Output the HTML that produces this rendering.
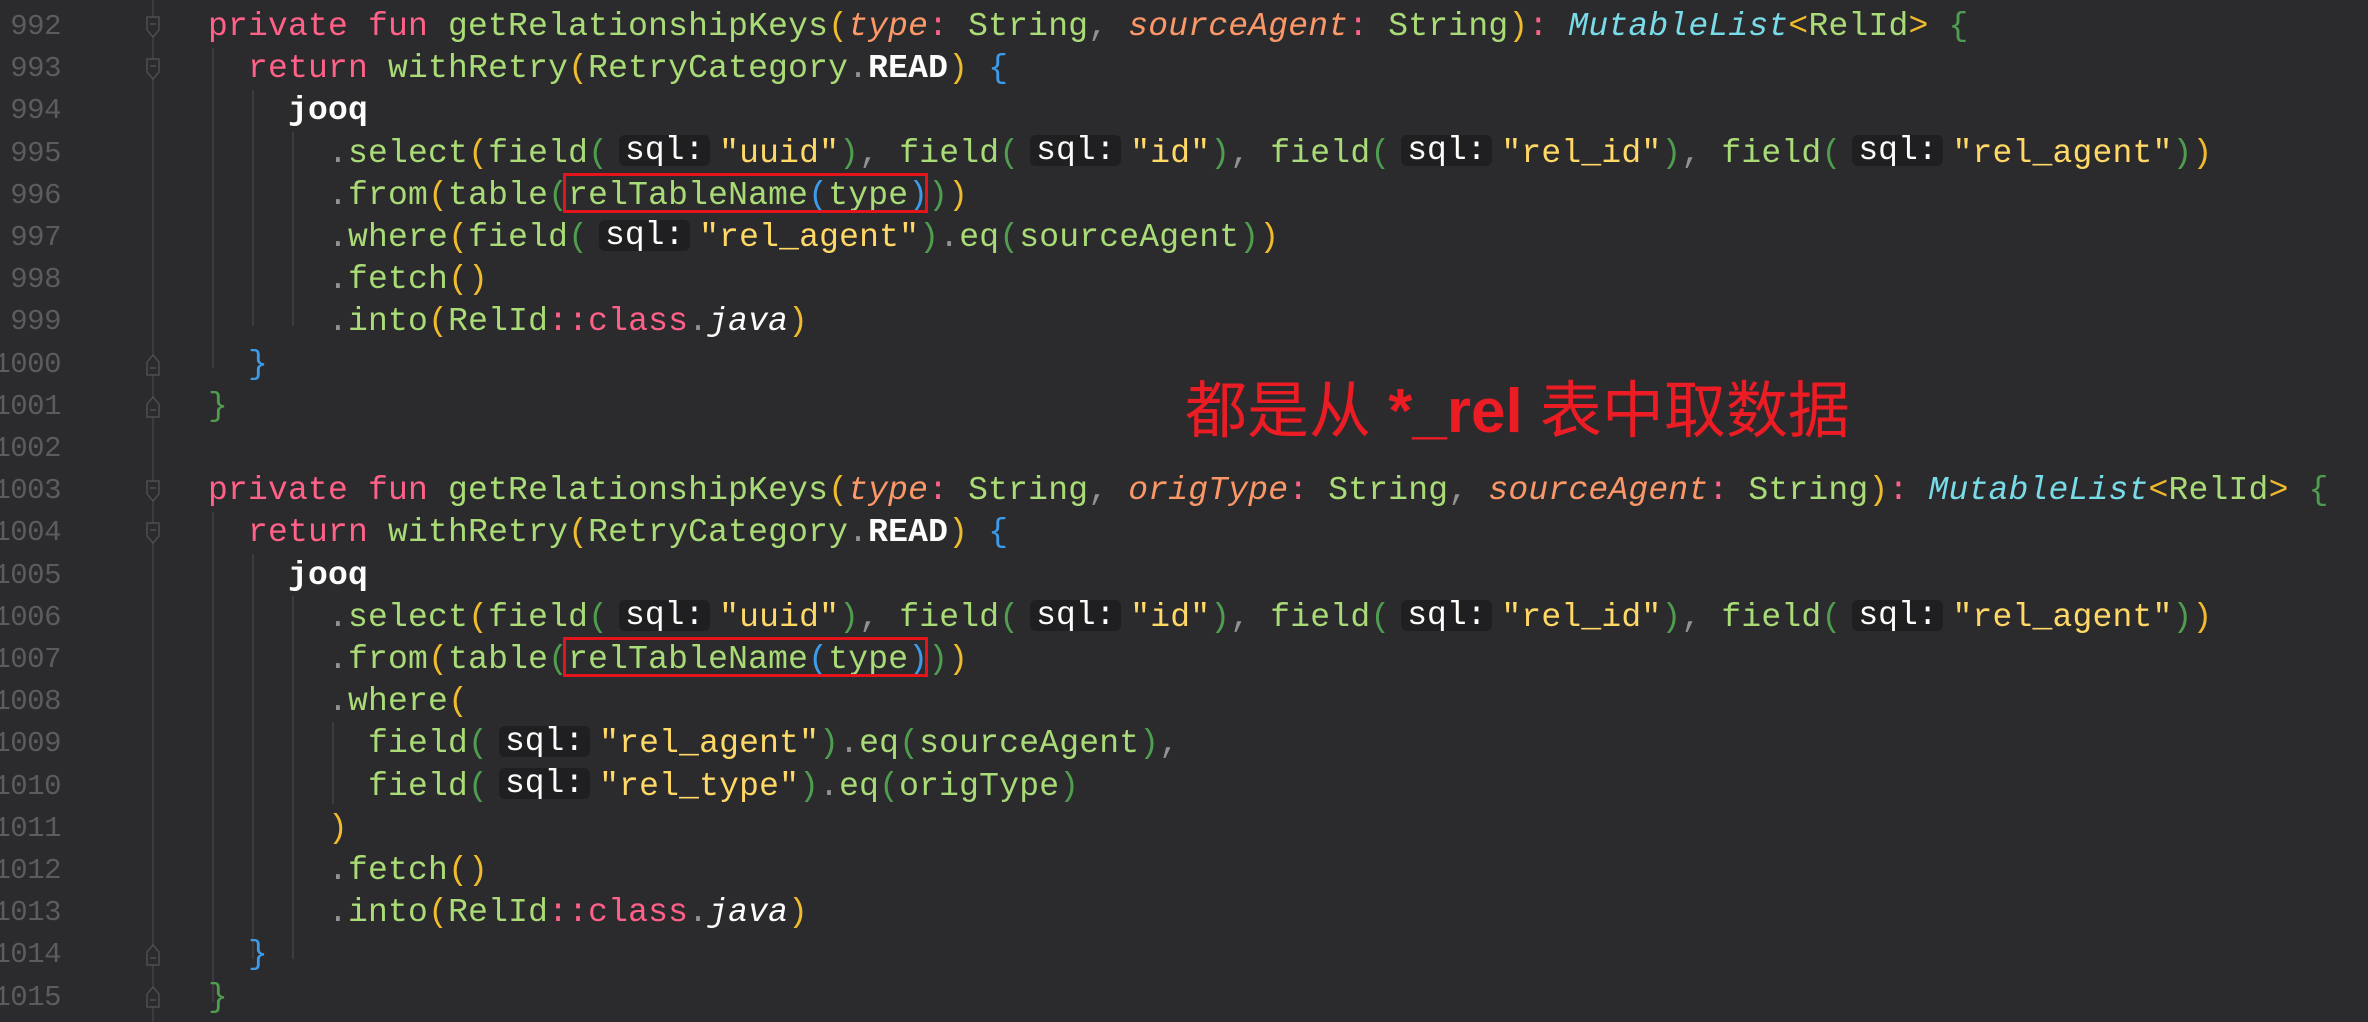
<!DOCTYPE html>
<html><head><meta charset="utf-8"><style>
html,body{margin:0;padding:0;background:#2b2a2d;width:2368px;height:1022px;overflow:hidden}
.ln{position:absolute;left:-39px;width:100px;text-align:right;font-family:"Liberation Mono",monospace;font-size:29px;color:#5d5b5f;line-height:42.2px;letter-spacing:-0.5px}
.code{position:absolute;left:208px;font-family:"Liberation Mono",monospace;font-size:33px;letter-spacing:0.2px;line-height:42.2px;white-space:pre;color:#a9dc76}
.k{color:#ff6188}.f{color:#a9dc76}.s{color:#ffd866}.p{color:#fc9867;font-style:italic}.t{color:#78dce8;font-style:italic}
.w{color:#fcfcfa}.wb{color:#fcfcfa;font-weight:bold}.wi{color:#fcfcfa;font-style:italic}
.y{color:#f0bb2c}.g{color:#4f9e4f}.b{color:#3d9be9}.c{color:#939293}.pk{color:#ff6188}
.h{display:inline-block;width:91px;height:31px;line-height:31px;margin:0 9px 0 11px;background:#1f1e21;border-radius:6px;color:#fcfcfa;text-align:center;vertical-align:middle;position:relative;top:-2px;letter-spacing:0}
.gl{position:absolute;width:2px;background:#3d3b3f}
.fold{position:absolute;left:146px;width:14px;height:22px}
.box{position:absolute;left:563px;width:365px;height:40px;border:3px solid #e3141b;box-sizing:border-box}
.note{position:absolute;left:1185px;top:360px;font-family:"Liberation Sans","Noto Sans CJK SC",sans-serif;font-size:62px;color:#ec1c24;white-space:nowrap}
</style></head><body>
<div class="gl" style="left:152px;top:0;height:1022px"></div>
<div class="gl" style="left:212px;top:48px;height:320px"></div>
<div class="gl" style="left:252px;top:90px;height:236px"></div>
<div class="gl" style="left:292px;top:132px;height:194px"></div>
<div class="gl" style="left:212px;top:512px;height:490px"></div>
<div class="gl" style="left:252px;top:554px;height:405px"></div>
<div class="gl" style="left:292px;top:596px;height:363px"></div>
<div class="gl" style="left:332px;top:722px;height:82px"></div>
<svg class="fold" style="top:16px" viewBox="0 0 14 22"><path d="M1 1H13V14L7 21L1 14Z" fill="#2b2a2d" stroke="#4e4c50" stroke-width="1.5"/><path d="M4 8H10" stroke="#4e4c50" stroke-width="1.5"/></svg>
<svg class="fold" style="top:58px" viewBox="0 0 14 22"><path d="M1 1H13V14L7 21L1 14Z" fill="#2b2a2d" stroke="#4e4c50" stroke-width="1.5"/><path d="M4 8H10" stroke="#4e4c50" stroke-width="1.5"/></svg>
<svg class="fold" style="top:354px" viewBox="0 0 14 22"><path d="M1 21H13V8L7 1L1 8Z" fill="#2b2a2d" stroke="#4e4c50" stroke-width="1.5"/><path d="M4 14H10" stroke="#4e4c50" stroke-width="1.5"/></svg>
<svg class="fold" style="top:396px" viewBox="0 0 14 22"><path d="M1 21H13V8L7 1L1 8Z" fill="#2b2a2d" stroke="#4e4c50" stroke-width="1.5"/><path d="M4 14H10" stroke="#4e4c50" stroke-width="1.5"/></svg>
<svg class="fold" style="top:480px" viewBox="0 0 14 22"><path d="M1 1H13V14L7 21L1 14Z" fill="#2b2a2d" stroke="#4e4c50" stroke-width="1.5"/><path d="M4 8H10" stroke="#4e4c50" stroke-width="1.5"/></svg>
<svg class="fold" style="top:522px" viewBox="0 0 14 22"><path d="M1 1H13V14L7 21L1 14Z" fill="#2b2a2d" stroke="#4e4c50" stroke-width="1.5"/><path d="M4 8H10" stroke="#4e4c50" stroke-width="1.5"/></svg>
<svg class="fold" style="top:944px" viewBox="0 0 14 22"><path d="M1 21H13V8L7 1L1 8Z" fill="#2b2a2d" stroke="#4e4c50" stroke-width="1.5"/><path d="M4 14H10" stroke="#4e4c50" stroke-width="1.5"/></svg>
<svg class="fold" style="top:986px" viewBox="0 0 14 22"><path d="M1 21H13V8L7 1L1 8Z" fill="#2b2a2d" stroke="#4e4c50" stroke-width="1.5"/><path d="M4 14H10" stroke="#4e4c50" stroke-width="1.5"/></svg>

<div class="ln" style="top:6px">992<br>993<br>994<br>995<br>996<br>997<br>998<br>999<br>1000<br>1001<br>1002<br>1003<br>1004<br>1005<br>1006<br>1007<br>1008<br>1009<br>1010<br>1011<br>1012<br>1013<br>1014<br>1015</div>

<div class="code" style="top:6px"><span class="k">private fun</span> getRelationshipKeys<span class="y">(</span><span class="p">type</span><span class="pk">:</span> String<span class="c">,</span> <span class="p">sourceAgent</span><span class="pk">:</span> String<span class="y">)</span><span class="pk">:</span> <span class="t">MutableList</span><span class="y">&lt;</span>RelId<span class="y">&gt;</span> <span class="g">{</span>
  <span class="k">return</span> withRetry<span class="y">(</span>RetryCategory<span class="c">.</span><span class="wb">READ</span><span class="y">)</span> <span class="b">{</span>
    <span class="wb">jooq</span>
      <span class="c">.</span>select<span class="y">(</span>field<span class="g">(</span><span class="h">sql:</span><span class="s">"uuid"</span><span class="g">)</span><span class="c">,</span> field<span class="g">(</span><span class="h">sql:</span><span class="s">"id"</span><span class="g">)</span><span class="c">,</span> field<span class="g">(</span><span class="h">sql:</span><span class="s">"rel_id"</span><span class="g">)</span><span class="c">,</span> field<span class="g">(</span><span class="h">sql:</span><span class="s">"rel_agent"</span><span class="g">)</span><span class="y">)</span>
      <span class="c">.</span>from<span class="y">(</span>table<span class="g">(</span>relTableName<span class="b">(</span>type<span class="b">)</span><span class="g">)</span><span class="y">)</span>
      <span class="c">.</span>where<span class="y">(</span>field<span class="g">(</span><span class="h">sql:</span><span class="s">"rel_agent"</span><span class="g">)</span><span class="c">.</span>eq<span class="g">(</span>sourceAgent<span class="g">)</span><span class="y">)</span>
      <span class="c">.</span>fetch<span class="y">()</span>
      <span class="c">.</span>into<span class="y">(</span>RelId<span class="pk">::class</span><span class="c">.</span><span class="wi">java</span><span class="y">)</span>
  <span class="b">}</span>
<span class="g">}</span>

<span class="k">private fun</span> getRelationshipKeys<span class="y">(</span><span class="p">type</span><span class="pk">:</span> String<span class="c">,</span> <span class="p">origType</span><span class="pk">:</span> String<span class="c">,</span> <span class="p">sourceAgent</span><span class="pk">:</span> String<span class="y">)</span><span class="pk">:</span> <span class="t">MutableList</span><span class="y">&lt;</span>RelId<span class="y">&gt;</span> <span class="g">{</span>
  <span class="k">return</span> withRetry<span class="y">(</span>RetryCategory<span class="c">.</span><span class="wb">READ</span><span class="y">)</span> <span class="b">{</span>
    <span class="wb">jooq</span>
      <span class="c">.</span>select<span class="y">(</span>field<span class="g">(</span><span class="h">sql:</span><span class="s">"uuid"</span><span class="g">)</span><span class="c">,</span> field<span class="g">(</span><span class="h">sql:</span><span class="s">"id"</span><span class="g">)</span><span class="c">,</span> field<span class="g">(</span><span class="h">sql:</span><span class="s">"rel_id"</span><span class="g">)</span><span class="c">,</span> field<span class="g">(</span><span class="h">sql:</span><span class="s">"rel_agent"</span><span class="g">)</span><span class="y">)</span>
      <span class="c">.</span>from<span class="y">(</span>table<span class="g">(</span>relTableName<span class="b">(</span>type<span class="b">)</span><span class="g">)</span><span class="y">)</span>
      <span class="c">.</span>where<span class="y">(</span>
        field<span class="g">(</span><span class="h">sql:</span><span class="s">"rel_agent"</span><span class="g">)</span><span class="c">.</span>eq<span class="g">(</span>sourceAgent<span class="g">)</span><span class="c">,</span>
        field<span class="g">(</span><span class="h">sql:</span><span class="s">"rel_type"</span><span class="g">)</span><span class="c">.</span>eq<span class="g">(</span>origType<span class="g">)</span>
      <span class="y">)</span>
      <span class="c">.</span>fetch<span class="y">()</span>
      <span class="c">.</span>into<span class="y">(</span>RelId<span class="pk">::class</span><span class="c">.</span><span class="wi">java</span><span class="y">)</span>
  <span class="b">}</span>
<span class="g">}</span></div>

<div class="box" style="top:173px"></div>
<div class="box" style="top:637px"></div>
<div class="note">都是从 <b>*_rel</b> 表中取数据</div>
</body></html>
